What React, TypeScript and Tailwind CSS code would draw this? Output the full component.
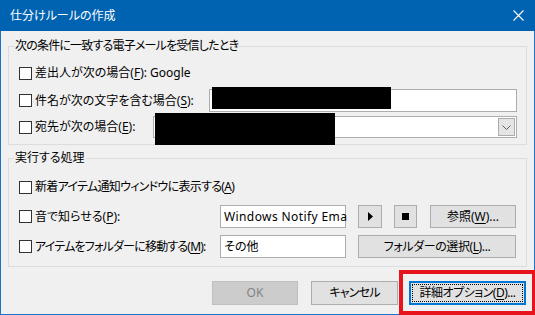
import React from 'react';

const font = "[font-family:'Noto_Sans','Noto_Sans_CJK_JP',sans-serif] [font-feature-settings:'palt']";

// access key letter, underlined like a Win32 mnemonic
const Key = ({ k }: { k: string }) => <span className="underline underline-offset-2">{k}</span>;

const Check = () => <div className="w-[13px] h-[13px] shrink-0 border border-[#333333] bg-white" />;

const Btn = ({ className = '', children }: { className?: string; children: React.ReactNode }) => (
  <div className={`h-full shrink-0 flex items-center justify-center whitespace-nowrap bg-[#e1e1e1] border border-[#adadad] ${className}`}>
    {children}
  </div>
);

const Field = ({ className = '', children }: { className?: string; children?: React.ReactNode }) => (
  <div className={`relative h-full shrink-0 flex items-center bg-white border border-[#abadb3] px-[3px] ${className}`}>
    {children}
  </div>
);

const App = () => {
  return (
    <div className={`relative w-[535px] h-[315px] bg-[#f0f0f0] border-x border-b border-[#1a74c7] text-[12px] leading-[16px] text-black ${font}`}>
      {/* title bar */}
      <div className="h-[31px] -mx-px bg-[#0063b1] flex items-center justify-between pl-[10px] pr-[10px] text-white">
        <span className="text-[12px]">仕分けルールの作成</span>
        <svg width="11" height="11" viewBox="0 0 11 11" className="mr-[1px]">
          <path d="M0.5 0.5 L10.5 10.5 M10.5 0.5 L0.5 10.5" stroke="white" strokeWidth="1.1" />
        </svg>
      </div>

      <div className="px-[7px] pt-[7px]">
        {/* conditions */}
        <fieldset className="border border-[#dcdcdc] pl-[10px] pr-[9px] pt-[8px] pb-[6px]">
          <legend className="ml-[-5px] px-[1px] leading-[16px] tracking-[-0.8px]">次の条件に一致する電子メールを受信したとき</legend>
          <div className="h-[22px] flex items-center gap-[3px] whitespace-nowrap">
            <Check />
            <span>差出人が次の場合(<Key k="F" />): Google</span>
          </div>
          <div className="h-[23px] mt-[5px] flex items-center gap-[3px] whitespace-nowrap">
            <Check />
            <span>件名が次の文字を含む場合(<Key k="S" />):</span>
            <Field className="ml-auto w-[308px]">
              <div className="absolute left-[2px] top-[-3px] w-[179px] h-[22px] bg-black" />
            </Field>
          </div>
          <div className="h-[22px] mt-[4px] flex items-center gap-[3px] whitespace-nowrap">
            <Check />
            <span>宛先が次の場合(<Key k="E" />):</span>
            <div className="relative ml-auto w-[364px] h-full shrink-0 flex items-stretch justify-end bg-white border border-[#abadb3] p-[1px]">
              <div className="absolute left-[1px] top-[-4px] w-[180px] h-[32px] bg-black" />
              <div className="w-[17px] flex items-center justify-center bg-[#e5e5e5] border border-[#acacac]">
                <svg width="9" height="5" viewBox="0 0 9 5">
                  <path d="M0.5 0.5 L4.5 4.5 L8.5 0.5" fill="none" stroke="#606060" strokeWidth="1" />
                </svg>
              </div>
            </div>
          </div>
        </fieldset>

        {/* actions */}
        <fieldset className="mt-[5px] border border-[#dcdcdc] pl-[10px] pr-[10px] pt-[10px] pb-[8px]">
          <legend className="ml-[-5px] px-[1px] leading-[16px]">実行する処理</legend>
          <div className="h-[22px] flex items-center gap-[3px] whitespace-nowrap">
            <Check />
            <span className="tracking-[-0.7px]">新着アイテム通知ウィンドウに表示する(<Key k="A" />)</span>
          </div>
          <div className="h-[23px] mt-[7px] flex items-center gap-[3px] whitespace-nowrap">
            <Check />
            <span>音で知らせる(<Key k="P" />):</span>
            <div className="ml-auto h-full flex items-stretch">
              <Field className="w-[126px] tracking-[0.4px]">Windows Notify Ema</Field>
              <Btn className="ml-[12px] w-[24px]">
                <svg width="5" height="9" viewBox="0 0 5 9"><path d="M0 0 L5 4.5 L0 9 Z" fill="black" /></svg>
              </Btn>
              <Btn className="ml-[12px] w-[23px]">
                <div className="w-[7px] h-[7px] bg-black" />
              </Btn>
              <Btn className="ml-[13px] w-[86px]">参照(<Key k="W" />)...</Btn>
            </div>
          </div>
          <div className="h-[23px] mt-[7px] flex items-center gap-[3px] whitespace-nowrap">
            <Check />
            <span className="tracking-[-0.8px]">アイテムをフォルダーに移動する(<Key k="M" />):</span>
            <div className="ml-auto h-full flex items-stretch">
              <Field className="w-[126px]">その他</Field>
              <Btn className="ml-[12px] w-[158px] tracking-[-0.4px]">フォルダーの選択(<Key k="L" />)...</Btn>
            </div>
          </div>
        </fieldset>
      </div>

      {/* dialog buttons */}
      <div className="mt-[14px] h-[24px] flex justify-end pr-[8px]">
        <div className="w-[86px] h-full flex items-center justify-center bg-[#cccccc] border border-[#bfbfbf] text-[#838383]">OK</div>
        <Btn className="ml-[13px] w-[87px] tracking-[-0.8px]">キャンセル</Btn>
        <div className="ml-[11px] w-[117px] h-full border-2 border-[#0078d7] bg-[#e1e1e1] p-px">
          <div className="h-full flex items-center justify-center whitespace-nowrap tracking-[-0.5px] outline-1 outline-dotted outline-black -outline-offset-1">
            詳細オプション(<Key k="D" />)...
          </div>
        </div>
      </div>

      {/* red annotation */}
      <div className="absolute left-[398px] top-[270px] w-[137px] h-[45px] border-4 border-[#e8141c]" />
    </div>
  );
};

export default App;
